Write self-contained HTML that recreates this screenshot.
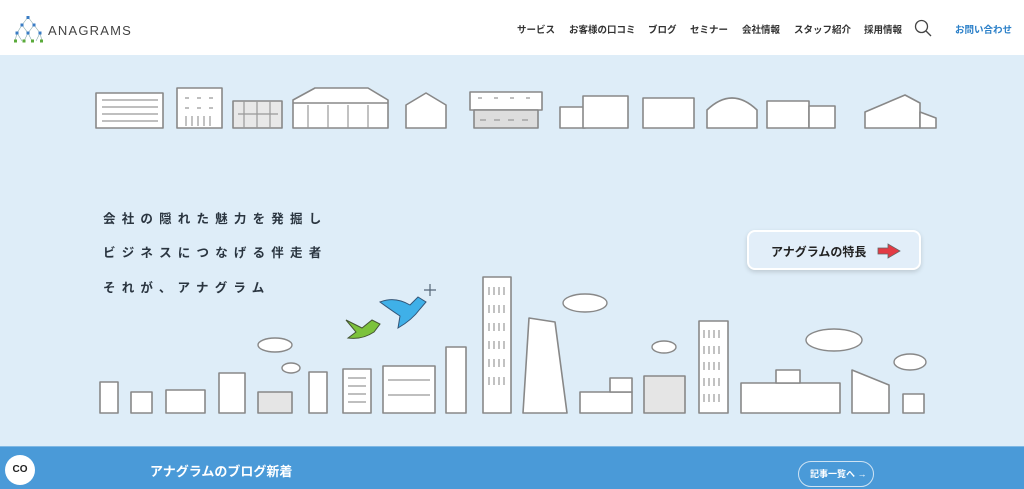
<!DOCTYPE html>
<html><head><meta charset="utf-8"><style>
*{margin:0;padding:0;box-sizing:border-box}
body{width:1024px;height:489px;overflow:hidden;background:#deedf8;font-family:"Liberation Sans","Noto Sans CJK JP",sans-serif;position:relative}
.hd{position:absolute;left:0;top:0;width:1024px;height:55px;background:#fff}
.logo{position:absolute;left:48px;top:23px;font-size:13px;letter-spacing:1.2px;color:#444}
.nav{position:absolute;top:22px;font-size:9.5px;font-weight:bold;color:#333;white-space:nowrap}
.copy{position:absolute;left:103px;font-size:12.5px;font-weight:bold;letter-spacing:6.2px;color:#2a3540}
.btn{position:absolute;left:747px;top:230px;width:174px;height:40px;border-radius:8px;background:#e2eef9;border:2px solid #fff;box-shadow:0 2px 5px rgba(0,0,0,.15);font-size:12px;font-weight:bold;color:#222}
.bar{position:absolute;left:0;top:446px;width:1024px;height:43px;background:#4a9ad8;border-top:1px solid #7fb8e4}
</style></head><body>
<div class="hd">
<svg style="position:absolute;left:14px;top:15px" width="30" height="28" viewBox="0 0 30 28">
<g stroke="#8aa" stroke-width=".6" fill="none"><path d="M14 2L8 10L3 18L1 26M14 2L20 10L26 18L28 26M8 10L14 18L20 10M3 18L8 26M14 18L10 26M14 18L18 26M26 18L22 26"/></g>
<g fill="#3a7cc4"><rect x="12.5" y="1" width="3" height="3"/><rect x="6.5" y="8.5" width="3" height="3"/><rect x="18.5" y="8.5" width="3" height="3"/><rect x="1.5" y="16.5" width="3" height="3"/><rect x="12.5" y="16.5" width="3" height="3"/><rect x="24.5" y="16.5" width="3" height="3"/></g>
<g fill="#5aaa3a"><rect x="0" y="24.5" width="3" height="3"/><rect x="8.5" y="24.5" width="3" height="3"/><rect x="17" y="24.5" width="3" height="3"/><rect x="26" y="24.5" width="3" height="3"/></g>
</svg>
<div class="logo">ANAGRAMS</div>
<div class="nav" style="left:517px">サービス</div>
<div class="nav" style="left:569px">お客様の口コミ</div>
<div class="nav" style="left:648px">ブログ</div>
<div class="nav" style="left:690px">セミナー</div>
<div class="nav" style="left:742px">会社情報</div>
<div class="nav" style="left:794px">スタッフ紹介</div>
<div class="nav" style="left:864px">採用情報</div>
<svg style="position:absolute;left:914px;top:19px" width="18" height="18" viewBox="0 0 18 18"><circle cx="7.5" cy="7.5" r="6" fill="none" stroke="#444" stroke-width="1.3"/><path d="M12 12L17 17" stroke="#444" stroke-width="1.3"/></svg>
<div class="nav" style="left:955px;color:#2a7fc8">お問い合わせ</div>
</div>

<svg style="position:absolute;left:0;top:0" width="1024" height="446" viewBox="0 0 1024 446">
<g stroke="#888" stroke-width="1.6" fill="#fff" stroke-linejoin="round">
<rect x="96" y="93" width="67" height="35"/>
<rect x="177" y="88" width="45" height="40"/>
<rect x="233" y="101" width="49" height="27" fill="#e8e8e8"/>
<path d="M293 100L315 88L368 88L388 100L388 128L293 128Z"/>
<path d="M293 103L388 103"/>
<path d="M406 105L426 93L446 105L446 128L406 128Z"/>
<rect x="470" y="92" width="72" height="18"/><rect x="474" y="110" width="64" height="18" fill="#ddd"/>
<rect x="560" y="107" width="25" height="21"/><rect x="583" y="96" width="45" height="32"/>
<rect x="643" y="98" width="51" height="30"/>
<path d="M707 128L707 110Q732 86 757 110L757 128Z"/>
<rect x="767" y="101" width="42" height="27"/><rect x="809" y="106" width="26" height="22"/>
<path d="M865 112L905 95L920 103L920 128L865 128Z"/><path d="M920 112L936 118L936 128L920 128Z"/>
<rect x="100" y="382" width="18" height="31"/>
<rect x="131" y="392" width="21" height="21"/>
<rect x="166" y="390" width="39" height="23"/>
<rect x="219" y="373" width="26" height="40"/>
<rect x="258" y="392" width="34" height="21" fill="#e5e5e5"/>
<rect x="309" y="372" width="18" height="41"/>
<rect x="343" y="369" width="28" height="44"/>
<rect x="383" y="366" width="52" height="47"/>
<rect x="446" y="347" width="20" height="66"/>
<rect x="483" y="277" width="28" height="136"/>
<path d="M523 413L529 318L555 322L567 413Z"/>
<rect x="580" y="392" width="52" height="21"/><rect x="610" y="378" width="22" height="14"/>
<rect x="644" y="376" width="41" height="37" fill="#e5e5e5"/>
<rect x="699" y="321" width="29" height="92"/>
<rect x="741" y="383" width="99" height="30"/><rect x="776" y="370" width="24" height="13"/>
<path d="M852 413L852 370L889 385L889 413Z"/>
<rect x="903" y="394" width="21" height="19"/>
</g>
<g stroke="#999" stroke-width="1.2">
<path d="M102 100h56M102 107h56M102 114h56M102 121h56"/>
<path d="M238 114h40M257 101v27M244 101v27M270 101v27"/>
<path d="M308 105v23M328 105v23M348 105v23M368 105v23"/>
<path d="M185 98h4M197 98h4M209 98h4M185 108h4M197 108h4M209 108h4M186 116v10M192 116v10M198 116v10M204 116v10M210 116v10"/>
<path d="M478 98h4M494 98h4M510 98h4M526 98h4M480 120h6M494 120h6M508 120h6M522 120h6"/>
<path d="M704 330v8M709 330v8M714 330v8M719 330v8M704 346v8M709 346v8M714 346v8M719 346v8M704 362v8M709 362v8M714 362v8M719 362v8M704 378v8M709 378v8M714 378v8M719 378v8M704 394v8M709 394v8M714 394v8M719 394v8"/>
<path d="M489 287v8M494 287v8M499 287v8M504 287v8M489 305v8M494 305v8M499 305v8M504 305v8M489 323v8M494 323v8M499 323v8M504 323v8M489 341v8M494 341v8M499 341v8M504 341v8M489 359v8M494 359v8M499 359v8M504 359v8M489 377v8M494 377v8M499 377v8M504 377v8"/>
<path d="M348 378h18M348 386h18M348 394h18M348 402h18M388 380h42M388 395h42"/>
</g>
<g fill="#fff" stroke="#888" stroke-width="1.4">
<ellipse cx="275" cy="345" rx="17" ry="7"/><ellipse cx="291" cy="368" rx="9" ry="5"/>
<ellipse cx="585" cy="303" rx="22" ry="9"/><ellipse cx="664" cy="347" rx="12" ry="6"/>
<ellipse cx="834" cy="340" rx="28" ry="11"/><ellipse cx="910" cy="362" rx="16" ry="8"/>
</g>
<path d="M380 302Q395 296 410 305L418 297L426 302L420 309Q412 320 398 328L400 316Q388 308 380 302Z" fill="#3fb0e8" stroke="#357" stroke-width="1"/>
<path d="M346 320L362 328L372 320L380 324L374 332Q362 340 348 338L356 332Z" fill="#7cc23c" stroke="#453" stroke-width="1"/>
<path d="M430 284v12M424 290h12" stroke="#567" stroke-width="1.2"/>
</svg>

<div class="copy" style="top:208px">会社の隠れた魅力を発掘し</div>
<div class="copy" style="top:242px">ビジネスにつなげる伴走者</div>
<div class="copy" style="top:277px">それが、アナグラム</div>

<div class="btn"><span style="position:absolute;left:22px;top:11px">アナグラムの特長</span>
<svg style="position:absolute;left:128px;top:11px" width="24" height="16" viewBox="0 0 24 16"><path d="M1 5h10V1l12 7-12 7v-4H1Z" fill="#e33a44" stroke="#666" stroke-width=".8"/></svg></div>

<div class="bar">
<div style="position:absolute;left:5px;top:8px;width:30px;height:30px;border-radius:50%;background:#fff;font-size:10px;font-weight:bold;text-align:center;line-height:30px;color:#222">CO</div>
<div style="position:absolute;left:150px;top:14px;font-size:13px;font-weight:bold;color:#fff">アナグラムのブログ新着</div>
<div style="position:absolute;left:798px;top:14px;width:76px;height:26px;border:1px solid #cfe3f3;border-radius:13px;color:#fff;font-size:9px;font-weight:bold;line-height:24px;padding-left:11px">記事一覧へ →</div>
</div>
</body></html>
